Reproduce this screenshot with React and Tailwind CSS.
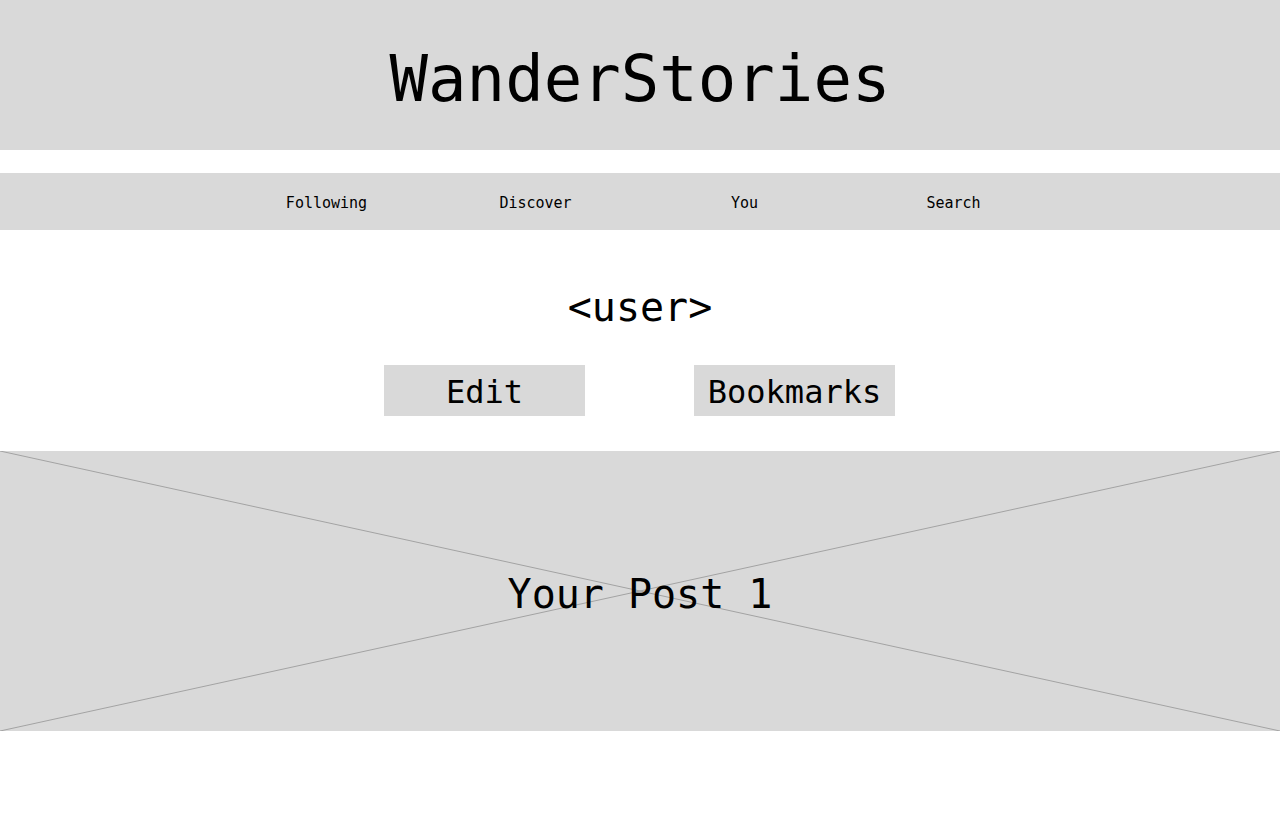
const navItems = ["Following", "Discover", "You", "Search"];

export default function App() {
  return (
    <div className="min-h-[832px] bg-white text-black font-['DejaVu_Sans_Mono','Liberation_Mono',monospace]">
      <header className="h-[150px] bg-[#d9d9d9] flex items-center justify-center">
        <h1 className="pt-[7px] text-[64px] leading-none font-normal">WanderStories</h1>
      </header>

      <nav className="mt-[23px] h-[57px] bg-[#d9d9d9] flex items-center justify-center">
        <div className="grid grid-cols-[repeat(4,209px)] pt-[3px]">
          {navItems.map((item) => (
            <div key={item} className="text-center text-[15px] leading-none">
              {item}
            </div>
          ))}
        </div>
      </nav>

      <section className="pt-[53px] flex flex-col items-center">
        <h2 className="text-[40px] leading-[48px] font-normal">&lt;user&gt;</h2>
        <div className="mt-[34px] pr-[1px] flex gap-[109px]">
          <button className="w-[201px] h-[51px] pt-[2px] bg-[#d9d9d9] text-[32px] leading-none">
            Edit
          </button>
          <button className="w-[201px] h-[51px] pt-[2px] bg-[#d9d9d9] text-[32px] leading-none">
            Bookmarks
          </button>
        </div>
      </section>

      <div className="relative mt-[35px] h-[280px] bg-[#d9d9d9] flex items-center justify-center">
        <svg
          className="absolute inset-0 w-full h-full"
          viewBox="0 0 1280 280"
          preserveAspectRatio="none"
        >
          <line x1="0" y1="0" x2="1280" y2="280" stroke="#a3a3a3" strokeWidth="1" />
          <line x1="0" y1="280" x2="1280" y2="0" stroke="#a3a3a3" strokeWidth="1" />
        </svg>
        <span className="relative pt-[5px] text-[40px] leading-none">Your Post 1</span>
      </div>
    </div>
  );
}
